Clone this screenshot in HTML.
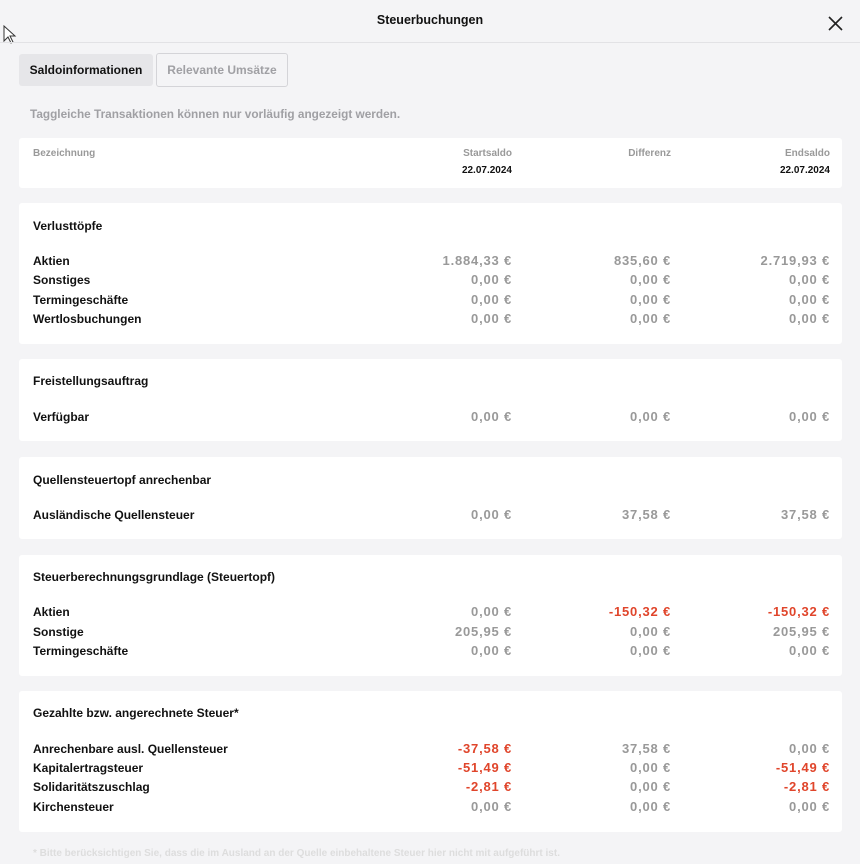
<!DOCTYPE html>
<html><head><meta charset="utf-8"><style>
*{margin:0;padding:0;box-sizing:border-box}
body{width:860px;height:853px;background:#f4f4f6;font-family:"Liberation Sans",sans-serif;position:relative;overflow:hidden;color:#111}
.a{position:absolute;white-space:nowrap;line-height:20px;font-size:12px;margin-top:1px}
.card{position:absolute;left:19px;width:823px;background:#fff;border-radius:3px}
.b{font-weight:bold}
.g{color:#999}
.r{color:#e0452b}
.l{left:33px}
.c1,.c2,.c3{text-align:right;width:200px;font-size:13px;letter-spacing:0.8px}
.c1{left:312px}.c2{left:471px}.c3{left:630px}
.h{font-size:10px;letter-spacing:0}
</style></head><body>
<div class="a b" style="left:0;width:860px;text-align:center;top:9px;font-size:12.5px">Steuerbuchungen</div>
<svg style="position:absolute;left:827px;top:15px" width="17" height="17"><path d="M2 2L15 15M15 2L2 15" stroke="#222" stroke-width="1.6"/></svg>
<svg style="position:absolute;left:3px;top:25px" width="14" height="20"><path d="M1 1L1 16L5 12L8 18L10 17L7 11L12 11Z" fill="#fff" stroke="#333" stroke-width="1"/></svg>
<div style="position:absolute;left:0;top:42px;width:860px;height:1px;background:#e2e2e5"></div>
<div class="a b" style="left:19px;top:53px;width:134px;height:32px;line-height:32px;background:#e6e6e9;border-radius:3px;text-align:center;font-size:12px">Saldoinformationen</div>
<div class="a b g" style="left:156px;top:52px;width:132px;height:34px;line-height:32px;border:1px solid #d4d4d8;border-radius:3px;text-align:center;font-size:12px;color:#a0a0a4">Relevante Umsätze</div>
<div class="a b" style="left:30px;top:103px;color:#a0a0a4;font-size:11.8px">Taggleiche Transaktionen können nur vorläufig angezeigt werden.</div>

<div class="card" style="top:138px;height:50px"></div>
<div class="a b g l h" style="top:143px">Bezeichnung</div>
<div class="a b g c1 h" style="top:143px">Startsaldo</div>
<div class="a b c1 h" style="top:160px">22.07.2024</div>
<div class="a b g c2 h" style="top:143px">Differenz</div>
<div class="a b g c3 h" style="top:143px">Endsaldo</div>
<div class="a b c3 h" style="top:160px">22.07.2024</div>

<div class="card" style="top:203px;height:141px"></div>
<div class="a b l" style="top:215px">Verlusttöpfe</div>
<div class="a b l" style="top:250px">Aktien</div><div class="a b g c1" style="top:250px">1.884,33 €</div><div class="a b g c2" style="top:250px">835,60 €</div><div class="a b g c3" style="top:250px">2.719,93 €</div>
<div class="a b l" style="top:269px">Sonstiges</div><div class="a b g c1" style="top:269px">0,00 €</div><div class="a b g c2" style="top:269px">0,00 €</div><div class="a b g c3" style="top:269px">0,00 €</div>
<div class="a b l" style="top:289px">Termingeschäfte</div><div class="a b g c1" style="top:289px">0,00 €</div><div class="a b g c2" style="top:289px">0,00 €</div><div class="a b g c3" style="top:289px">0,00 €</div>
<div class="a b l" style="top:308px">Wertlosbuchungen</div><div class="a b g c1" style="top:308px">0,00 €</div><div class="a b g c2" style="top:308px">0,00 €</div><div class="a b g c3" style="top:308px">0,00 €</div>

<div class="card" style="top:359px;height:82px"></div>
<div class="a b l" style="top:370px">Freistellungsauftrag</div>
<div class="a b l" style="top:406px">Verfügbar</div><div class="a b g c1" style="top:406px">0,00 €</div><div class="a b g c2" style="top:406px">0,00 €</div><div class="a b g c3" style="top:406px">0,00 €</div>

<div class="card" style="top:457px;height:82px"></div>
<div class="a b l" style="top:469px">Quellensteuertopf anrechenbar</div>
<div class="a b l" style="top:504px">Ausländische Quellensteuer</div><div class="a b g c1" style="top:504px">0,00 €</div><div class="a b g c2" style="top:504px">37,58 €</div><div class="a b g c3" style="top:504px">37,58 €</div>

<div class="card" style="top:555px;height:121px"></div>
<div class="a b l" style="top:566px">Steuerberechnungsgrundlage (Steuertopf)</div>
<div class="a b l" style="top:601px">Aktien</div><div class="a b g c1" style="top:601px">0,00 €</div><div class="a b r c2" style="top:601px">-150,32 €</div><div class="a b r c3" style="top:601px">-150,32 €</div>
<div class="a b l" style="top:621px">Sonstige</div><div class="a b g c1" style="top:621px">205,95 €</div><div class="a b g c2" style="top:621px">0,00 €</div><div class="a b g c3" style="top:621px">205,95 €</div>
<div class="a b l" style="top:640px">Termingeschäfte</div><div class="a b g c1" style="top:640px">0,00 €</div><div class="a b g c2" style="top:640px">0,00 €</div><div class="a b g c3" style="top:640px">0,00 €</div>

<div class="card" style="top:691px;height:141px"></div>
<div class="a b l" style="top:702px">Gezahlte bzw. angerechnete Steuer*</div>
<div class="a b l" style="top:738px">Anrechenbare ausl. Quellensteuer</div><div class="a b r c1" style="top:738px">-37,58 €</div><div class="a b g c2" style="top:738px">37,58 €</div><div class="a b g c3" style="top:738px">0,00 €</div>
<div class="a b l" style="top:757px">Kapitalertragsteuer</div><div class="a b r c1" style="top:757px">-51,49 €</div><div class="a b g c2" style="top:757px">0,00 €</div><div class="a b r c3" style="top:757px">-51,49 €</div>
<div class="a b l" style="top:776px">Solidaritätszuschlag</div><div class="a b r c1" style="top:776px">-2,81 €</div><div class="a b g c2" style="top:776px">0,00 €</div><div class="a b r c3" style="top:776px">-2,81 €</div>
<div class="a b l" style="top:796px">Kirchensteuer</div><div class="a b g c1" style="top:796px">0,00 €</div><div class="a b g c2" style="top:796px">0,00 €</div><div class="a b g c3" style="top:796px">0,00 €</div>
<div class="a b" style="left:33px;top:843px;font-size:10px;color:#ddd">* Bitte berücksichtigen Sie, dass die im Ausland an der Quelle einbehaltene Steuer hier nicht mit aufgeführt ist.</div>
</body></html>
